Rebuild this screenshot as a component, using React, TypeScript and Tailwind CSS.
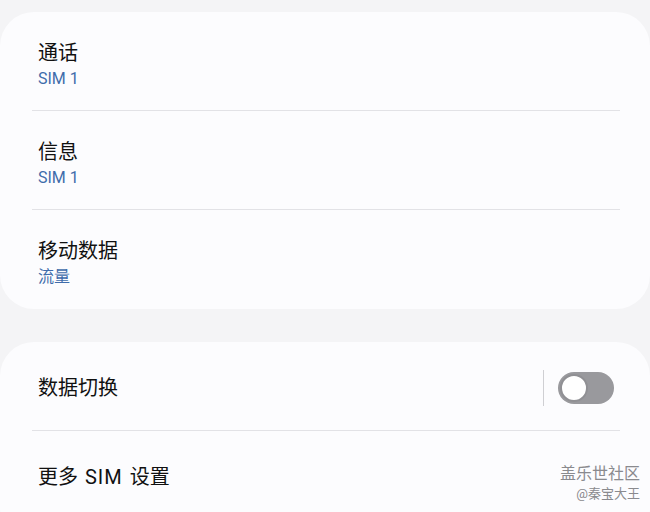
import React from "react";

const font = { fontFamily: 'Roboto, "Noto Sans CJK SC", "Noto Sans", sans-serif' };

function Row({ title, sub, divider }: { title: string; sub?: string; divider?: boolean }) {
  return (
    <div className="flex flex-col">
      <div className="h-[98px] flex flex-col justify-center pt-[7px] px-[38px]">
        <div className="text-[20px] leading-[28px] text-[#111]">{title}</div>
        {sub && <div className="text-[16px] leading-[24px] text-[#3f6cab]">{sub}</div>}
      </div>
      {divider && <div className="ml-[32px] mr-[30px] h-px bg-[#e2e2e6]" />}
    </div>
  );
}

export default function App() {
  return (
    <div className="relative w-[650px] h-[512px] overflow-hidden bg-[#f4f4f6]" style={font}>
      <div className="pt-[12px] flex flex-col gap-[33px]">
        <div className="rounded-[34px] bg-[#fcfcfe] h-[297px] flex flex-col">
          <Row title="通话" sub="SIM 1" divider />
          <Row title="信息" sub="SIM 1" divider />
          <Row title="移动数据" sub="流量" />
        </div>
        <div className="rounded-[34px] bg-[#fcfcfe] h-[200px] flex flex-col">
          <div className="h-[88px] flex items-center pl-[38px] pr-[36px] pt-[3px]">
            <div className="flex-1 text-[20px] leading-[28px] text-[#111]">数据切换</div>
            <div className="w-px h-[36px] bg-[#cfcfd3] mr-[14px]" />
            <div className="w-[56px] h-[32px] rounded-full bg-[#99999d] flex items-center px-[2px]">
              <div className="w-[28px] h-[28px] rounded-full bg-white border-[2px] border-[#909094]" />
            </div>
          </div>
          <div className="ml-[32px] mr-[30px] h-px bg-[#e2e2e6]" />
          <div className="h-[90px] flex items-center px-[38px] pt-[1px]">
            <div className="text-[20px] leading-[28px] text-[#111] whitespace-pre [word-spacing:2px]">
              更多 <span className="tracking-[1px]">SIM</span> 设置
            </div>
          </div>
        </div>
      </div>
      <div className="absolute right-[10px] top-[464px] flex flex-col items-end text-[#8a8a8e]">
        <div className="text-[16px] leading-[20px]">盖乐世社区</div>
        <div className="text-[13px] leading-[16px] mt-[2px]">@秦宝大王</div>
      </div>
    </div>
  );
}
